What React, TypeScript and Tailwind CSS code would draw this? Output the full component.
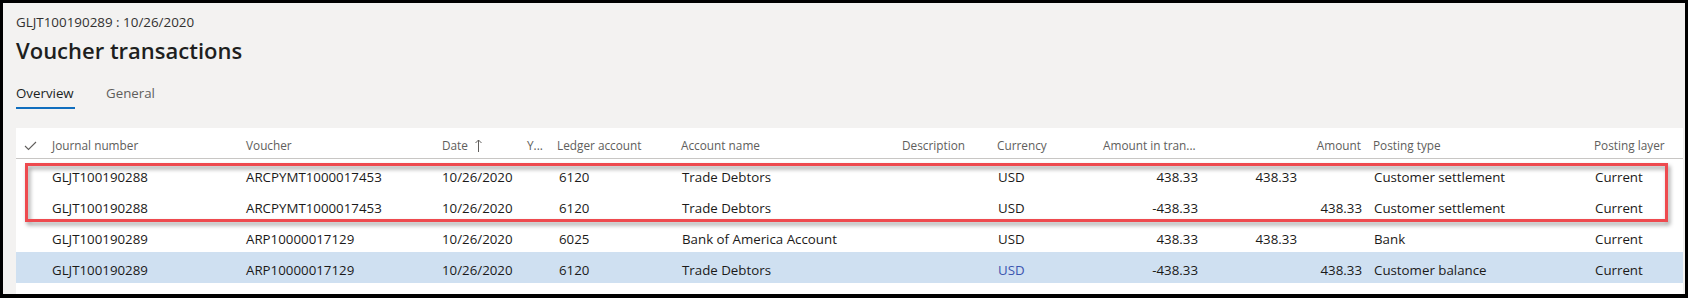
import React from "react";

const font = { fontFamily: '"Segoe UI", "Open Sans", "Noto Sans", sans-serif' };

type Row = {
  journal: string;
  voucher: string;
  date: string;
  ledger: string;
  name: string;
  currency: string;
  amt: string;
  debit: string;
  credit: string;
  type: string;
  layer: string;
  selected?: boolean;
};

const rows: Row[] = [
  { journal: "GLJT100190288", voucher: "ARCPYMT1000017453", date: "10/26/2020", ledger: "6120", name: "Trade Debtors", currency: "USD", amt: "438.33", debit: "438.33", credit: "", type: "Customer settlement", layer: "Current" },
  { journal: "GLJT100190288", voucher: "ARCPYMT1000017453", date: "10/26/2020", ledger: "6120", name: "Trade Debtors", currency: "USD", amt: "-438.33", debit: "", credit: "438.33", type: "Customer settlement", layer: "Current" },
  { journal: "GLJT100190289", voucher: "ARP10000017129", date: "10/26/2020", ledger: "6025", name: "Bank of America Account", currency: "USD", amt: "438.33", debit: "438.33", credit: "", type: "Bank", layer: "Current" },
  { journal: "GLJT100190289", voucher: "ARP10000017129", date: "10/26/2020", ledger: "6120", name: "Trade Debtors", currency: "USD", amt: "-438.33", debit: "", credit: "438.33", type: "Customer balance", layer: "Current", selected: true },
];

const grid =
  "grid grid-cols-[36px_194px_196px_85px_30px_124px_221px_95px_106px_97px_99px_65px_230px_1fr] items-center";

export default function App() {
  return (
    <div className="w-[1688px] h-[298px] bg-black pt-[3px] pl-[3px] pr-[3px] pb-[4px]" style={font}>
      <div className="w-full h-full bg-[#f3f2f1] flex flex-col">
        <div className="pl-[13px]">
          <div className="mt-[9px] h-[20px] leading-[20px] text-[13.4px] text-[#323130]">GLJT100190289 : 10/26/2020</div>
          <div className="mt-[2px] h-[32px] leading-[32px] text-[22px] font-semibold text-[#201f1e]">Voucher transactions</div>
          <div className="mt-[17px] flex text-[13.3px]">
            <div className="flex flex-col w-[59px]">
              <div className="h-[20px] leading-[20px] text-[#201f1e]">Overview</div>
              <div className="mt-[4px] h-[2px] bg-[#106ebe]" />
            </div>
            <div className="ml-[31px] h-[20px] leading-[20px] text-[#605e5c]">General</div>
          </div>
        </div>
        <div className="relative mt-[19px] ml-[13px] mr-[2px] flex-1 bg-white text-[13.3px]">
          <div className={`${grid} h-[31px] pt-[5px] border-b border-[#c8c6c4] text-[11.8px] text-[#605e5c]`}>
            <div className="pl-[8px]">
              <svg width="13" height="10" viewBox="0 0 13 10" fill="none">
                <polyline points="1,5 4.5,8.5 12,1" stroke="#605e5c" strokeWidth="1.1" />
              </svg>
            </div>
            <div>Journal number</div>
            <div>Voucher</div>
            <div className="flex items-center gap-[7px]">
              <span>Date</span>
              <svg width="7" height="13" viewBox="0 0 7 13" fill="none">
                <line x1="3.5" y1="1" x2="3.5" y2="13" stroke="#605e5c" strokeWidth="1" />
                <polyline points="0.5,4 3.5,1 6.5,4" stroke="#605e5c" strokeWidth="1" />
              </svg>
            </div>
            <div>Y...</div>
            <div>Ledger account</div>
            <div>Account name</div>
            <div>Description</div>
            <div>Currency</div>
            <div className="whitespace-nowrap">Amount in tran...</div>
            <div />
            <div className="text-right pr-[3px]">Amount</div>
            <div className="pl-[9px]">Posting type</div>
            <div>Posting layer</div>
          </div>
          {rows.map((r, i) => (
            <div
              key={i}
              className={`${grid} h-[31px] pt-[6px] text-[#1b1a19] ${r.selected ? "bg-[#cfe0f1]" : ""}`}
            >
              <div />
              <div>{r.journal}</div>
              <div>{r.voucher}</div>
              <div>{r.date}</div>
              <div />
              <div className="pl-[2px]">{r.ledger}</div>
              <div className="pl-[1px]">{r.name}</div>
              <div />
              <div className={`pl-[1px] ${r.selected ? "text-[#3b55b0]" : ""}`}>{r.currency}</div>
              <div className="text-right pr-[2px]">{r.amt}</div>
              <div className="text-right pr-[2px]">{r.debit}</div>
              <div className="text-right pr-[2px]">{r.credit}</div>
              <div className="pl-[10px]">{r.type}</div>
              <div className="pl-[1px]">{r.layer}</div>
            </div>
          ))}
          <div className="absolute left-[9px] top-[35px] w-[1643px] h-[59px] border-[3px] border-[#ee4a4f] [filter:drop-shadow(2px_3px_2px_rgba(0,0,0,0.4))]" />
        </div>
      </div>
    </div>
  );
}
